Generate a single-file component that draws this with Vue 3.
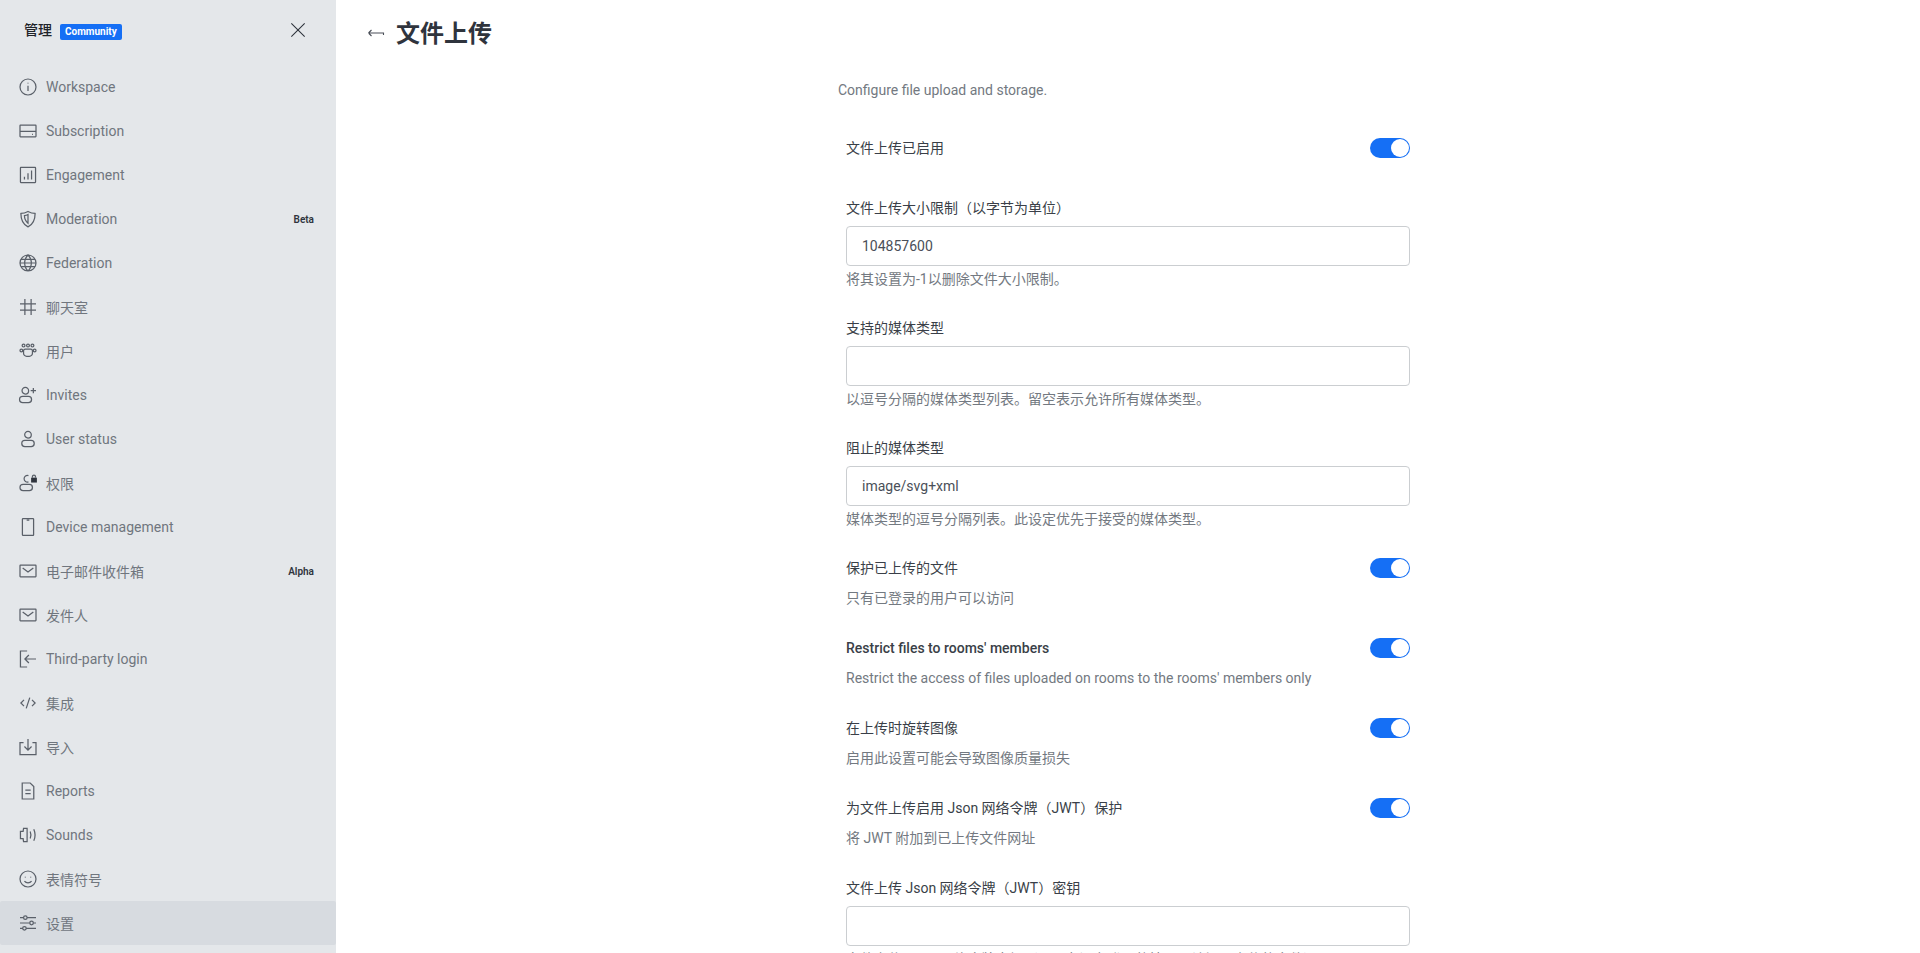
<script setup>
const nav = [
  { label: 'Workspace', icon: 'info' },
  { label: 'Subscription', icon: 'card' },
  { label: 'Engagement', icon: 'chart' },
  { label: 'Moderation', icon: 'shield', badge: 'Beta' },
  { label: 'Federation', icon: 'globe' },
  { label: '聊天室', icon: 'hash' },
  { label: '用户', icon: 'team' },
  { label: 'Invites', icon: 'userplus' },
  { label: 'User status', icon: 'user' },
  { label: '权限', icon: 'userlock' },
  { label: 'Device management', icon: 'phone' },
  { label: '电子邮件收件箱', icon: 'mail', badge: 'Alpha' },
  { label: '发件人', icon: 'mail' },
  { label: 'Third-party login', icon: 'login' },
  { label: '集成', icon: 'code' },
  { label: '导入', icon: 'import' },
  { label: 'Reports', icon: 'file' },
  { label: 'Sounds', icon: 'sound' },
  { label: '表情符号', icon: 'smile' },
  { label: '设置', icon: 'sliders', active: true },
]
const icons = {
  info: 'M12 3a9 9 0 1 0 0 18 9 9 0 0 0 0-18zM12 10.500v6M12 7.200v1',
  card: 'M3.500 5.500h17a.5.5 0 0 1 .5.5v12a.5.5 0 0 1-.5.5h-17a.5.5 0 0 1-.5-.5V6a.5.5 0 0 1 .5-.5zM3 12.500h18M16.500 15.800h1',
  chart: 'M4 3.500h16a.5.5 0 0 1 .5.5v16a.5.5 0 0 1-.5.5H4a.5.5 0 0 1-.5-.5V4a.5.5 0 0 1 .5-.5zM8 17v-3M12 17V10M16 17V7',
  shield: 'M12 3.500c3 1.600 5.500 2.200 8 2.300 0 7-1.600 12-8 15-6.400-3-8-8-8-15 2.500-.1 5-.7 8-2.300zM12 7c-1.500.8-2.800 1.100-4 1.200 0 3.500.8 6 4 8.500z',
  globe: 'M12 3a9 9 0 1 0 0 18 9 9 0 0 0 0-18zM3 12h18M4.200 7.800h15.600M4.200 16.200h15.600M12 3c-5 5-5 13 0 18M12 3c5 5 5 13 0 18',
  hash: 'M3 8.500h18M3 15.500h18M8.500 3v18M15.500 3v18',
  team: 'M12 7.500a1.600 1.600 0 1 0 0-3.200 1.600 1.600 0 0 0 0 3.200zM7 7.500a1.600 1.600 0 1 0 0-3.200 1.600 1.600 0 0 0 0 3.200zM17 7.500a1.600 1.600 0 1 0 0-3.200 1.600 1.600 0 0 0 0 3.200zM4.500 13a1.500 1.500 0 1 0 0-3 1.500 1.500 0 0 0 0 3zM19.500 13a1.500 1.500 0 1 0 0-3 1.500 1.500 0 0 0 0 3zM9 10h6a2 2 0 0 1 2 2v2.500a3.500 3.500 0 0 1-3.500 3.500h-3A3.500 3.500 0 0 1 7 14.500V12a2 2 0 0 1 2-2z',
  userplus: 'M9 3.500a3.700 3.700 0 1 0 0 7.400 3.700 3.700 0 0 0 0-7.400zM6 13.500h6.500a3.500 3.500 0 0 1 0 7H6a3.500 3.500 0 0 1 0-7zM18 4v6M15 7h6',
  user: 'M12 3.500a3.700 3.700 0 1 0 0 7.400 3.700 3.700 0 0 0 0-7.400zM8.500 13.500h7a3.500 3.500 0 0 1 0 7h-7a3.500 3.500 0 0 1 0-7z',
  userlock: 'M12.500 3.700a3.700 3.700 0 1 0 0 7M6.500 13.500h7a3.500 3.500 0 0 1 0 7h-7a3.500 3.500 0 0 1 0-7z',
  phone: 'M6.500 2.500h11a.8.8 0 0 1 .8.8v17.400a.8.8 0 0 1-.8.8h-11a.8.8 0 0 1-.8-.8V3.300a.8.8 0 0 1 .8-.8zM10.500 4.300h3',
  mail: 'M3.500 5.500h17a.5.5 0 0 1 .5.5v12a.5.5 0 0 1-.5.5h-17a.5.5 0 0 1-.5-.5V6a.5.5 0 0 1 .5-.5zM6 8.500l6 4.500 6-4.500',
  login: 'M11 3H3.500v18H11M21 12H8.500M13 7.500L8.500 12l4.500 4.500',
  code: 'M7.500 8.500L4 12l3.500 3.500M16.500 8.500L20 12l-3.500 3.500M14 6l-4 12',
  import: 'M7 7H3v13.500h18V7h-4M12 3v12.500M8 11.500l4 4 4-4',
  file: 'M5.500 3h9l4 4v14h-13zM9 11h6M9 15h6',
  sound: 'M11 4.500H7l-.5 3.500H3.500v8h3l.5 3.500h4zM14.500 8c1 2.500 1 5.500 0 8M18.500 5.500c1.800 4 1.800 9 0 13',
  smile: 'M12 3a9 9 0 1 0 0 18 9 9 0 0 0 0-18zM8 14.500c2 2.500 6 2.500 8 0M9 9.500v.8M15 9.500v.8',
  sliders: 'M3 6h4M11 6h10M3 12h11M18 12h3M3 18h3M10 18h11M9 4a2 2 0 1 0 0 4 2 2 0 0 0 0-4zM16 10a2 2 0 1 0 0 4 2 2 0 0 0 0-4zM8 16a2 2 0 1 0 0 4 2 2 0 0 0 0-4z',
}
</script>

<template>
  <div class="shell">
    <aside class="sidebar">
      <header class="side-head">
        <span class="side-title">管理</span>
        <span class="tag">Community</span>
        <svg class="close" viewBox="0 0 24 24" width="20" height="20"><path d="M4 4l16 16M20 4L4 20" /></svg>
      </header>
      <nav class="nav">
        <div v-for="item in nav" :key="item.label" class="nav-item" :class="{ active: item.active }">
          <svg class="nav-icon" viewBox="0.75 0.75 22.5 22.5" width="20" height="20">
            <path :d="icons[item.icon]" />
            <rect v-if="item.icon === 'userlock'" x="15.500" y="6" width="6.500" height="5.500" fill="#2f343d" stroke="none" />
            <path v-if="item.icon === 'userlock'" d="M17 6V4.800a1.700 1.700 0 0 1 3.400 0V6" />
          </svg>
          <span class="nav-label">{{ item.label }}</span>
          <span v-if="item.badge" class="nav-badge">{{ item.badge }}</span>
        </div>
      </nav>
    </aside>
    <main class="main">
      <header class="page-head">
        <svg class="back" viewBox="0 0 20 20" width="20" height="20"><path d="M2.500 9h15v2M2.500 9l3-3M2.500 9l3 3" /></svg>
        <h1>文件上传</h1>
      </header>
      <div class="scroll">
        <div class="form">
          <p class="intro">Configure file upload and storage.</p>
          <div class="fields">
            <div class="field first">
              <div class="row"><span class="label">文件上传已启用</span><span class="toggle"></span></div>
            </div>
            <div class="field">
              <span class="label">文件上传大小限制（以字节为单位）</span>
              <div class="input">104857600</div>
              <p class="hint">将其设置为-1以删除文件大小限制。</p>
            </div>
            <div class="field">
              <span class="label">支持的媒体类型</span>
              <div class="input"></div>
              <p class="hint">以逗号分隔的媒体类型列表。留空表示允许所有媒体类型。</p>
            </div>
            <div class="field">
              <span class="label">阻止的媒体类型</span>
              <div class="input">image/svg+xml</div>
              <p class="hint">媒体类型的逗号分隔列表。此设定优先于接受的媒体类型。</p>
            </div>
            <div class="field sw">
              <div class="row"><span class="label">保护已上传的文件</span><span class="toggle"></span></div>
              <p class="hint">只有已登录的用户可以访问</p>
            </div>
            <div class="field sw">
              <div class="row"><span class="label bold">Restrict files to rooms' members</span><span class="toggle"></span></div>
              <p class="hint">Restrict the access of files uploaded on rooms to the rooms' members only</p>
            </div>
            <div class="field sw">
              <div class="row"><span class="label">在上传时旋转图像</span><span class="toggle"></span></div>
              <p class="hint">启用此设置可能会导致图像质量损失</p>
            </div>
            <div class="field sw">
              <div class="row"><span class="label">为文件上传启用 Json 网络令牌（JWT）保护</span><span class="toggle"></span></div>
              <p class="hint">将 JWT 附加到已上传文件网址</p>
            </div>
            <div class="field">
              <span class="label">文件上传 Json 网络令牌（JWT）密钥</span>
              <div class="input"></div>
              <p class="hint">文件上传 Json 网络令牌密钥（用于在没有登录的情况下访问已上传的文件）</p>
            </div>
          </div>
        </div>
      </div>
    </main>
  </div>
</template>

<style>
html, body { margin: 0; height: 100%; overflow: hidden; background: #fff; }
</style>

<style scoped>
.shell {
  display: flex;
  height: 953px;
  overflow: hidden;
  font-family: Roboto, "Noto Sans CJK SC", sans-serif;
  color: #2f343d;
}
.sidebar {
  width: 336px;
  flex: none;
  background: #e4e7ea;
  display: flex;
  flex-direction: column;
  overflow: hidden;
}
.side-head {
  display: flex;
  align-items: center;
  height: 60px;
  padding: 0 24px;
  box-sizing: border-box;
}
.side-title { font-size: 14px; font-weight: 500; color: #1f2329; margin-top: -2px; }
.tag {
  margin-left: 8px;
  margin-top: 4px;
  background: #156ff5;
  color: #fff;
  font-size: 10px;
  font-weight: 700;
  line-height: 16px;
  padding: 0 5px;
  border-radius: 2px;
}
.close { margin-left: auto; margin-right: 4px; fill: none; stroke: #2f343d; stroke-width: 1.300; }
.nav { display: flex; flex-direction: column; padding-top: 5px; }
.nav-item {
  display: flex;
  align-items: center;
  height: 44px;
  padding: 0 22px 0 18px;
  flex: none;
  color: #70767e;
  font-size: 14px;
  border-radius: 2px;
}
.nav-item.active { background: #d7dbe0; }
.nav-icon { flex: none; margin-right: 8px; fill: none; stroke: #5a6069; stroke-width: 1.400; }
.nav-label { flex: 1; }
.nav-badge { font-size: 10px; font-weight: 600; color: #2f343d; }
.main { flex: 1; min-width: 0; display: flex; flex-direction: column; }
.page-head {
  display: flex;
  align-items: center;
  height: 68px;
  padding: 0 30px;
  flex: none;
  box-sizing: border-box;
}
.back { fill: none; stroke: #4a4f58; stroke-width: 1.100; margin-right: 10px; }
h1 { margin: 0; font-size: 24px; font-weight: 700; color: #2f343d; line-height: 32px; }
.scroll { flex: 1; display: flex; justify-content: center; overflow: hidden; }
.form { width: 580px; padding-top: 12px; }
.intro { margin: 0; font-size: 14px; line-height: 20px; color: #737981; }
.fields { padding: 38px 8px 0; display: flex; flex-direction: column; }
.field { display: flex; flex-direction: column; margin-bottom: 29px; }
.field.first { margin-bottom: 40px; }
.field.sw { margin-bottom: 30px; }
.row { display: flex; align-items: center; justify-content: space-between; height: 20px; }
.label { font-size: 14px; line-height: 20px; color: #3a3f48; display: block; }
.label.bold { font-weight: 500; }
.toggle {
  width: 40px;
  height: 20px;
  border-radius: 10px;
  background: #156ff5;
  position: relative;
  flex: none;
}
.toggle::after {
  content: "";
  position: absolute;
  right: 1px;
  top: 1px;
  width: 18px;
  height: 18px;
  border-radius: 50%;
  background: #fff;
}
.input {
  margin-top: 8px;
  height: 40px;
  box-sizing: border-box;
  border: 1px solid #cbced1;
  border-radius: 4px;
  padding: 0 15px;
  font-size: 14px;
  line-height: 38px;
  color: #4a4f58;
}
.hint { margin: 3px 0 0; font-size: 14px; line-height: 20px; color: #737981; }
.sw .hint { margin-top: 10px; }
</style>
